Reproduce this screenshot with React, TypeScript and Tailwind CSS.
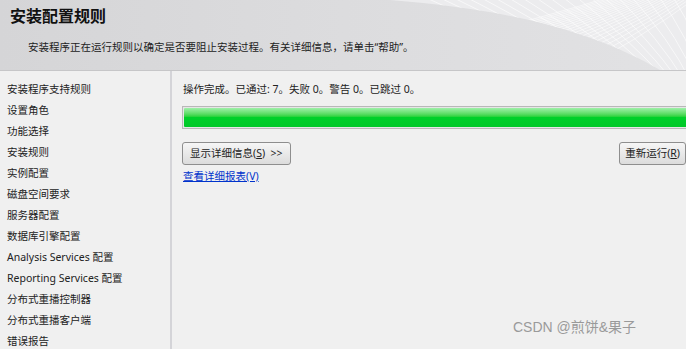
import React from 'react';

const font = { fontFamily: '"Noto Sans", "Noto Sans CJK SC", sans-serif' };

const steps = [
  '安装程序支持规则',
  '设置角色',
  '功能选择',
  '安装规则',
  '实例配置',
  '磁盘空间要求',
  '服务器配置',
  '数据库引擎配置',
  'Analysis Services 配置',
  'Reporting Services 配置',
  '分布式重播控制器',
  '分布式重播客户端',
  '错误报告',
];

function Mesh() {
  const lines = [];
  for (let i = 0; i < 22; i++) {
    lines.push(
      <path
        key={'a' + i}
        d={`M ${420 + i * 14} -5 Q ${520 + i * 10} 40 ${600 + i * 6} 80`}
        stroke="#ffffff"
        strokeOpacity="0.75"
        strokeWidth="0.8"
        fill="none"
      />
    );
    lines.push(
      <path
        key={'b' + i}
        d={`M ${700 - i * 4} -5 Q ${640 - i * 8} 40 ${560 - i * 14} 80`}
        stroke="#ffffff"
        strokeOpacity="0.65"
        strokeWidth="0.8"
        fill="none"
      />
    );
  }
  return (
    <svg className="absolute inset-0" width="686" height="70" viewBox="0 0 686 70">
      <defs>
        <clipPath id="wave">
          <path d="M 390 0 C 520 10 600 35 660 70 L 686 70 L 686 0 Z" />
        </clipPath>
      </defs>
      <path d="M 390 0 C 520 10 600 35 660 70 L 686 70 L 686 0 Z" fill="#ececee" />
      <g clipPath="url(#wave)">{lines}</g>
    </svg>
  );
}

export default function App() {
  return (
    <div className="w-[686px] h-[349px] bg-[#f0f0f0] overflow-hidden flex flex-col" style={font}>
      {/* Header */}
      <div className="relative h-[71px] shrink-0 bg-gradient-to-r from-[#d5d5d7] via-[#dcdcde] to-[#e2e2e4] border-b border-[#c6c6c8]">
        <Mesh />
        <div className="relative pl-[10px] pt-[4px]">
          <h1 className="text-[16px] font-bold text-[#111] leading-[24px]">安装配置规则</h1>
          <p className="pl-[18px] pt-[12px] text-[10.5px] text-[#222] leading-[14px]">
            安装程序正在运行规则以确定是否要阻止安装过程。有关详细信息，请单击“帮助”。
          </p>
        </div>
      </div>

      <div className="flex flex-1">
        {/* Sidebar */}
        <div className="w-[172px] shrink-0 border-r-2 border-[#d4d4d8] pt-[8px] pl-[7px]">
          {steps.map((s) => (
            <div key={s} className="h-[21px] text-[10.5px] text-[#222] leading-[21px] whitespace-nowrap">
              {s}
            </div>
          ))}
        </div>

        {/* Content */}
        <div className="flex-1 pl-[10px] pt-[8px]">
          <div className="h-[21px] text-[10.5px] text-[#222] leading-[21px] pl-[1px]">
            操作完成。已通过: 7。失败 0。警告 0。已跳过 0。
          </div>
          <div className="mt-[6px] h-[23px] border border-[#b8b8b8] bg-[#e6e6e6] p-[1px] mr-[-4px]">
            <div className="h-full bg-gradient-to-b from-[#9ef0a8] via-[#00d02a] to-[#00c828] rounded-[1px]" />
          </div>
          <div className="mt-[13px] flex items-start justify-between">
            <button className="h-[23px] px-[7px] border border-[#8e8e8e] rounded-[3px] bg-gradient-to-b from-[#f6f6f6] to-[#dcdcdc] text-[10.5px] text-[#222] whitespace-nowrap">
              显示详细信息(<span className="underline">S</span>)&nbsp;&nbsp;&gt;&gt;
            </button>
            <button className="h-[23px] px-[5px] border border-[#8e8e8e] rounded-[3px] bg-gradient-to-b from-[#f6f6f6] to-[#dcdcdc] text-[10.5px] text-[#222]">
              重新运行(<span className="underline">R</span>)
            </button>
          </div>
          <a className="block mt-[3px] text-[10.5px] text-[#0033cc] underline leading-[16px] pl-[1px]">
            查看详细报表(V)
          </a>
          <div
            className="mt-[133px] pl-[331px] text-[14px] text-[#9a9a9a] whitespace-nowrap"
            style={{ fontFamily: '"Liberation Sans", "Noto Sans CJK SC", sans-serif' }}
          >
            CSDN @煎饼&amp;果子
          </div>
        </div>
      </div>
    </div>
  );
}
